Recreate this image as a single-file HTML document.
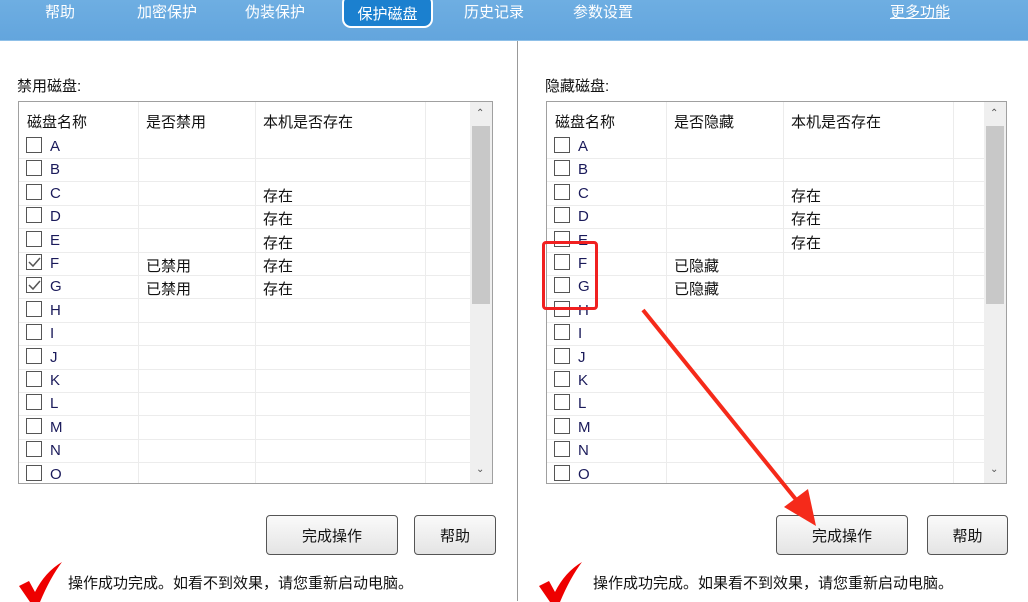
<!DOCTYPE html>
<html><head><meta charset="utf-8"><style>
*{margin:0;padding:0;box-sizing:border-box}
body{width:1028px;height:601px;background:#fff;position:relative;overflow:hidden;font-family:"Liberation Sans","Noto Sans CJK SC",sans-serif;font-size:15px;color:#111}
.hdr{position:absolute;left:0;top:0;width:1028px;height:41px;background:linear-gradient(#6eaee2,#63a5dd);border-bottom:1px solid #8fc0e8}
.tab{position:absolute;top:1px;color:#fff;font-size:15px}
.act{position:absolute;left:342px;top:-6px;width:91px;height:34px;border:2px solid #fff;border-radius:9px;background:#1b80cf;color:#fff;text-align:center;padding-top:7px;font-size:15px}
.a{position:absolute}
.tbl{position:absolute;border:1px solid #a0a0a0;background:#fff;overflow:hidden}
.vl{position:absolute;top:0;bottom:0;width:1px;background:#ececec}
.hl{position:absolute;left:0;height:1px;background:#ececec}
.cb{position:absolute;width:16px;height:16px;border:1px solid #555;background:#fff}
.lt{position:absolute;color:#1a1a5a;font-size:15px}
.sb{position:absolute;top:0;bottom:0;width:22px;background:#efefef}
.btn{position:absolute;height:40px;border:1px solid #555;border-radius:4px;background:linear-gradient(#fafafa,#e4e4e4);text-align:center;line-height:42px;font-size:15px}
</style></head><body>
<div class="hdr"></div>
<div class="tab" style="left:45px">帮助</div>
<div class="tab" style="left:137px">加密保护</div>
<div class="tab" style="left:245px">伪装保护</div>
<div class="act">保护磁盘</div>
<div class="tab" style="left:464px">历史记录</div>
<div class="tab" style="left:573px">参数设置</div>
<div class="tab" style="left:890px;text-decoration:underline">更多功能</div>
<div class="a" style="left:517px;top:41px;width:1px;height:560px;background:#999"></div>

<div class="a" style="left:17px;top:75px">禁用磁盘:</div>
<div class="a" style="left:545px;top:75px">隐藏磁盘:</div>

<div id="L" class="tbl" style="left:18px;top:101px;width:475px;height:383px"></div>
<div id="R" class="tbl" style="left:546px;top:101px;width:461px;height:383px"></div>

<div class="btn" style="left:266px;top:515px;width:132px">完成操作</div>
<div class="btn" style="left:414px;top:515px;width:82px">帮助</div>
<div class="btn" style="left:776px;top:515px;width:132px">完成操作</div>
<div class="btn" style="left:927px;top:515px;width:81px">帮助</div>

<svg class="a" style="left:18px;top:562px" width="46" height="40"><path d="M1 24 L11 19 L17 30 Q27 10 44 0 Q32 16 22 40 L12 40 Z" fill="#e00"/></svg>
<div class="a" style="left:68px;top:572px">操作成功完成。如看不到效果，请您重新启动电脑。</div>
<svg class="a" style="left:538px;top:562px" width="46" height="40"><path d="M1 24 L11 19 L17 30 Q27 10 44 0 Q32 16 22 40 L12 40 Z" fill="#e00"/></svg>
<div class="a" style="left:593px;top:572px">操作成功完成。如果看不到效果，请您重新启动电脑。</div>

<div class="a" style="left:542px;top:241px;width:56px;height:69px;border:3px solid #f02020;border-radius:4px"></div>
<svg class="a" style="left:0;top:0" width="1028" height="601"><line x1="643" y1="310" x2="798" y2="502" stroke="#f52a1a" stroke-width="4"/><polygon points="816,526 784,507 808,489" fill="#f52a1a"/></svg>

<script>
function build(id,cols,h2,marks,w){
 var t=document.getElementById(id),s='';
 cols.forEach(function(c){s+='<div class="vl" style="left:'+c+'px"></div>'});
 s+='<div class="a" style="left:8px;top:9px">磁盘名称</div><div class="a" style="left:'+(cols[0]+8)+'px;top:9px">'+h2+'</div><div class="a" style="left:'+(cols[1]+8)+'px;top:9px">本机是否存在</div>';
 var L='ABCDEFGHIJKLMNO';
 for(var i=0;i<15;i++){var y=34+i*23.4;
  s+='<div class="hl" style="top:'+(y+22)+'px;width:'+(w-24)+'px"></div>';
  s+='<div class="cb" style="left:7px;top:'+(y+1)+'px">'+(marks[i]&&marks[i][0]?'<svg width="14" height="14" style="position:absolute;left:0;top:0"><path d="M2 7 L6 11 L13 3" stroke="#555" stroke-width="1.5" fill="none"/></svg>':'')+'</div>';
  s+='<div class="lt" style="left:31px;top:'+(y+2)+'px">'+L[i]+'</div>';
  if(marks[i]&&marks[i][1])s+='<div class="a" style="left:'+(cols[0]+8)+'px;top:'+(y+2)+'px">'+marks[i][1]+'</div>';
  if(i>=2&&i<=(id=='L'?6:4))s+='<div class="a" style="left:'+(cols[1]+8)+'px;top:'+(y+2)+'px">存在</div>';
 }
 s+='<div class="sb" style="left:'+(w-24)+'px"><div style="position:absolute;left:2px;top:24px;width:18px;height:178px;background:#c8c8c8"></div><div style="position:absolute;left:6px;top:6px;font-size:10px;color:#555">&#8963;</div><div style="position:absolute;left:6px;bottom:8px;font-size:10px;color:#555">&#8964;</div></div>';
 t.innerHTML=s;
}
build('L',[119,236,406],'是否禁用',{5:[1,'已禁用'],6:[1,'已禁用']},475);
build('R',[119,236,406],'是否隐藏',{5:[0,'已隐藏'],6:[0,'已隐藏']},461);
</script>
</body></html>
